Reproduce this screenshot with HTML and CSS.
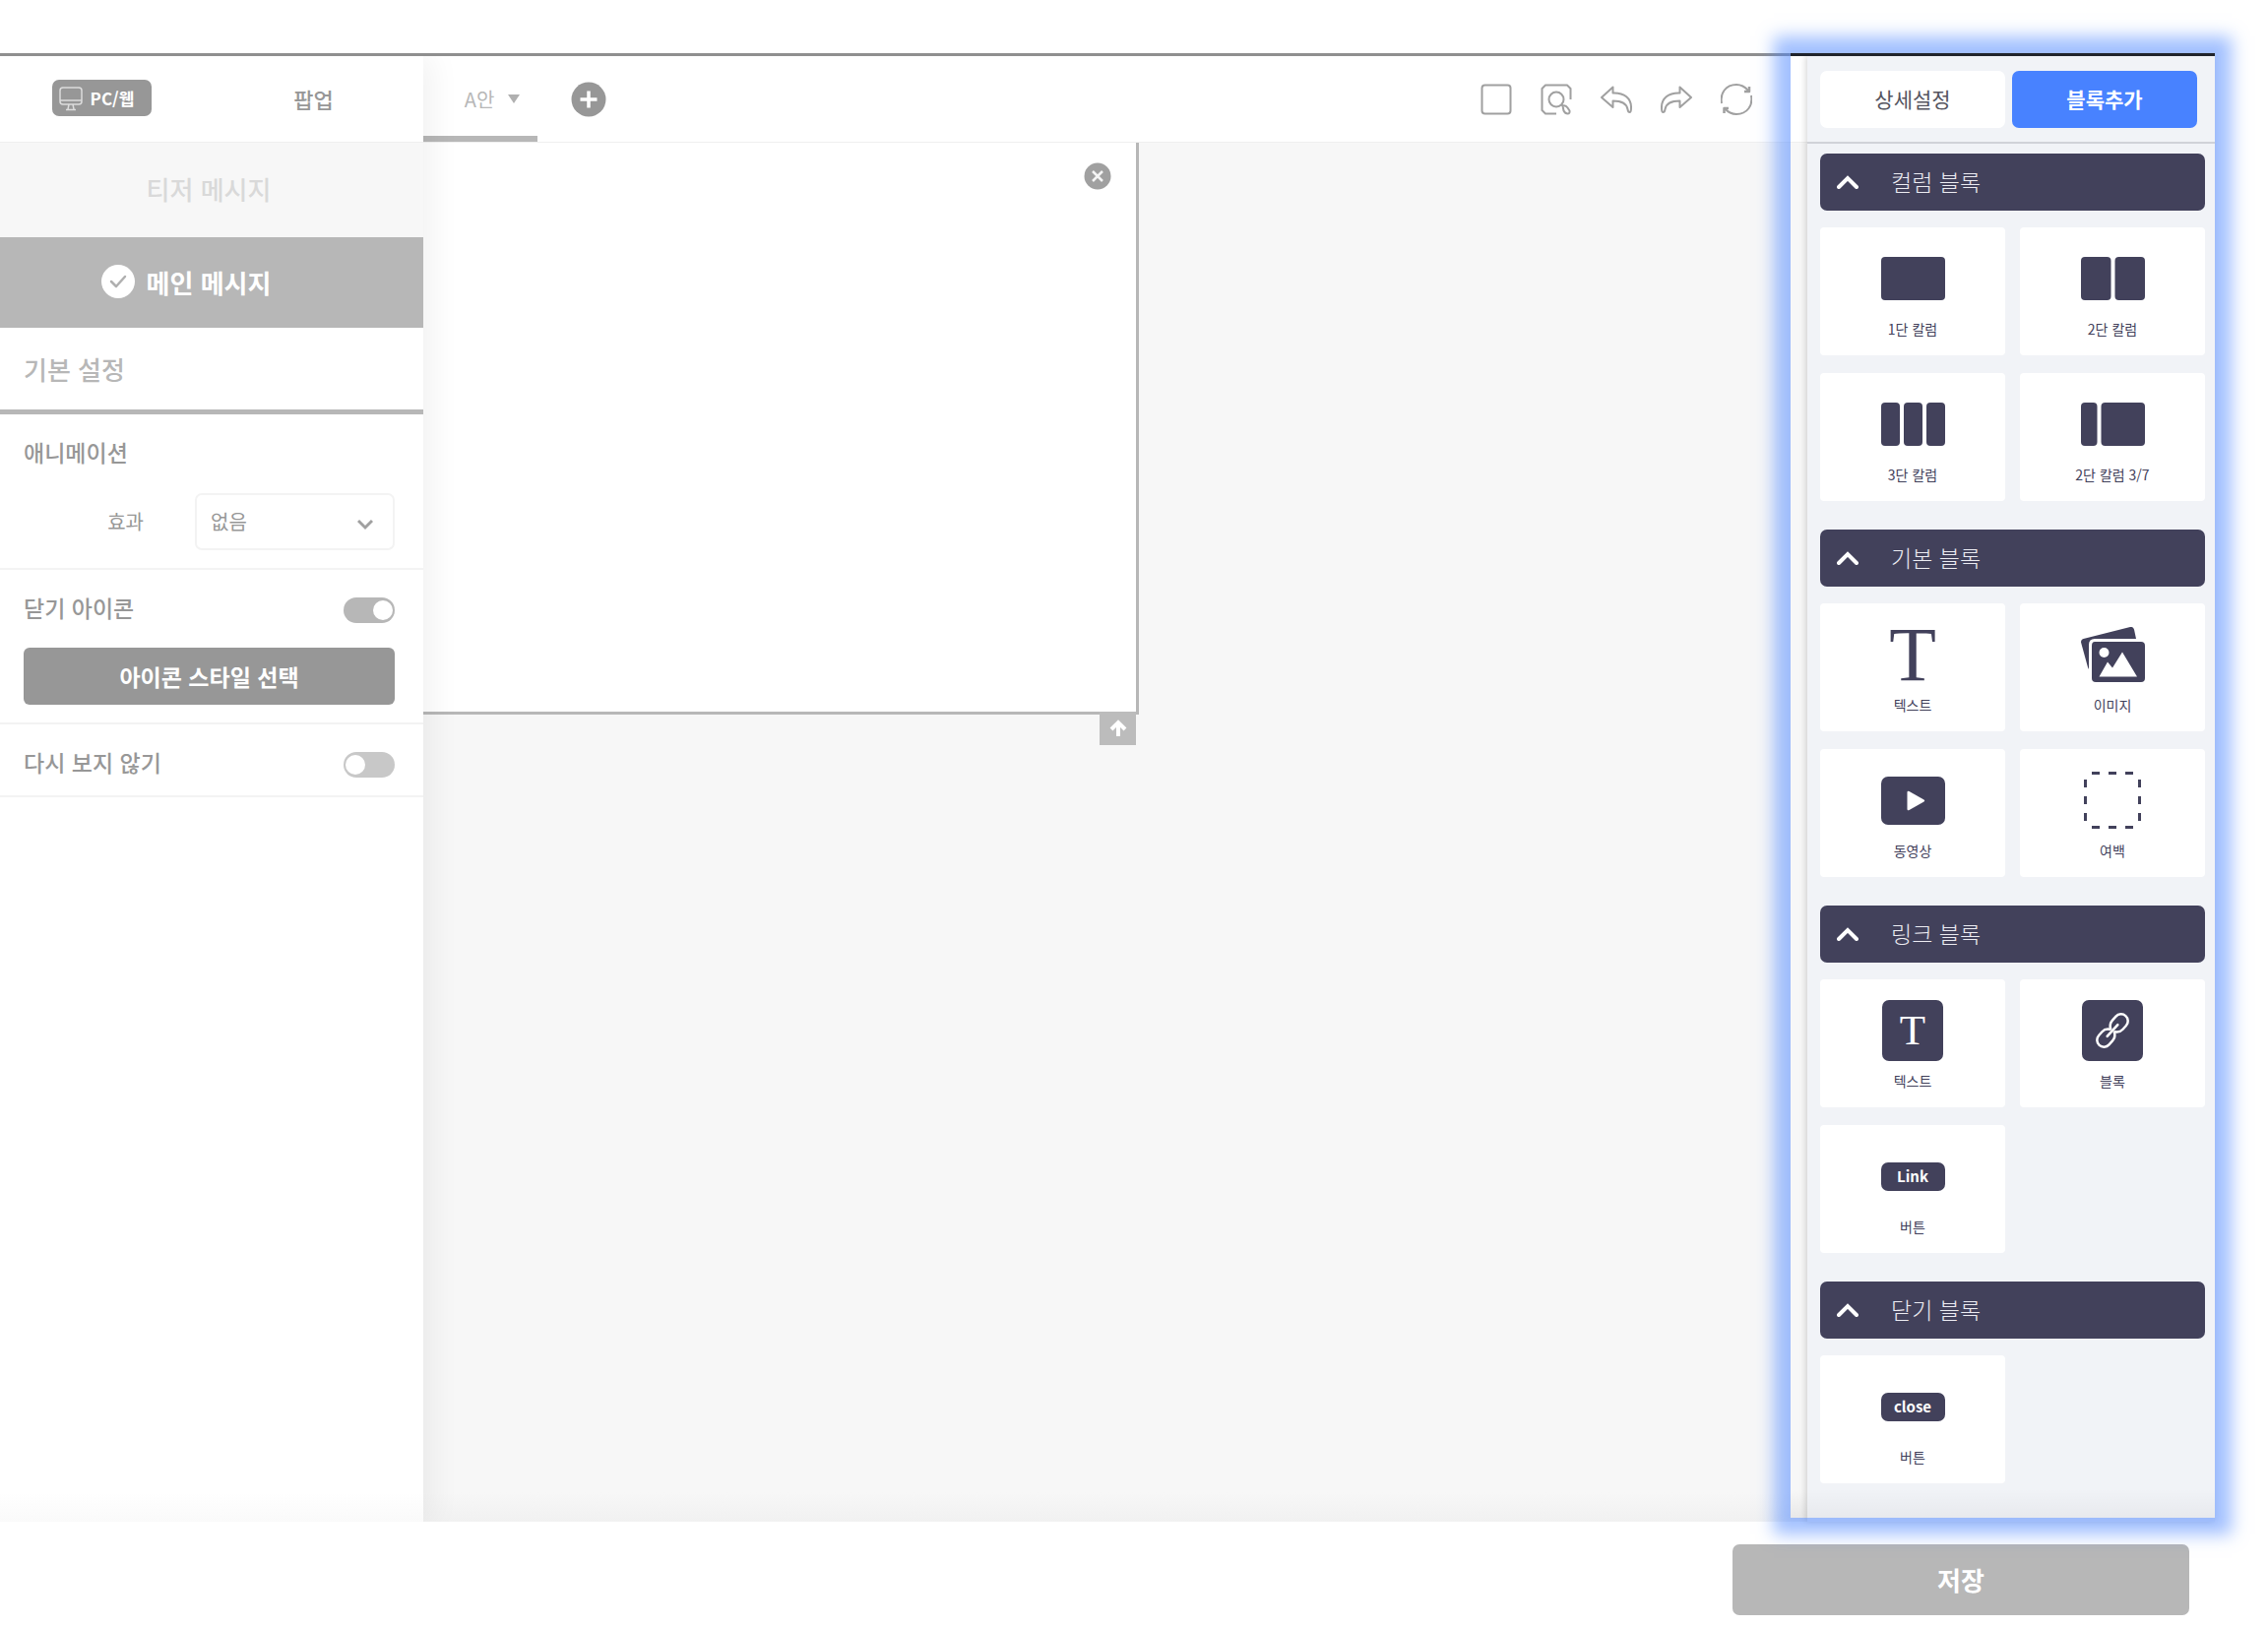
FILE: index.html
```html
<!DOCTYPE html>
<html lang="ko">
<head>
    <meta charset="UTF-8">
    <meta name="viewport" content="width=device-width, initial-scale=1.0">
    <title>팝업 메시지</title>
    <link rel="stylesheet" href="styles.css">
</head>
<body>
    <div class="editor">
        <section class="settings">
            <div class="settings-top">
                <div class="channel">
                    <span class="device-badge">
                        <svg width="24" height="26" viewBox="0 0 24 26" fill="none" stroke="#dcdcdc" stroke-width="1.5">
                            <rect x="1" y="2" width="22" height="17" rx="3"/>
                            <path d="M1 15h22M10 19l-1 5M14 19l1 5M7 24.5h10"/>
                        </svg>
                        PC/웹
                    </span>
                </div>
                <div class="channel">팝업</div>
            </div>
            <button type="button" class="message-tab">티저 메시지</button>
            <button type="button" class="message-tab active">
                <svg class="check" width="34" height="34" viewBox="0 0 34 34">
                    <circle cx="17" cy="17" r="17" fill="#fff"/>
                    <path d="M10 17l5 5 9-10" fill="none" stroke="#b0b0b0" stroke-width="2.5" stroke-linecap="round" stroke-linejoin="round"/>
                </svg>
                메인 메시지
            </button>
            <h2 class="settings-title">기본 설정</h2>
            <div class="setting">
                <h3>애니메이션</h3>
                <div class="effect-row">
                    <label for="effect">효과</label>
                    <div class="select-box">
                        <select id="effect">
                            <option>없음</option>
                        </select>
                        <svg class="select-arrow" width="16" height="12" viewBox="0 0 16 12" fill="none" stroke="#a0a0a0" stroke-width="3">
                            <path d="M1 2l7 7 7-7"/>
                        </svg>
                    </div>
                </div>
            </div>
            <div class="setting">
                <div class="toggle-row">
                    <label for="close-icon">닫기 아이콘</label>
                    <input type="checkbox" id="close-icon" class="toggle" checked>
                </div>
                <button type="button" class="style-button">아이콘 스타일 선택</button>
            </div>
            <div class="setting last">
                <div class="toggle-row">
                    <label for="hide-again">다시 보지 않기</label>
                    <input type="checkbox" id="hide-again" class="toggle">
                </div>
            </div>
        </section>

        <main class="workspace">
            <div class="toolbar">
                <button type="button" class="plan-tab">
                    A안
                    <svg width="12" height="9" viewBox="0 0 12 9"><path d="M0 0h12L6 9z" fill="#b0b0b0"/></svg>
                </button>
                <button type="button" class="icon-button" aria-label="추가">
                    <svg width="36" height="36" viewBox="0 0 36 36">
                        <circle cx="18" cy="18" r="17.5" fill="#979797"/>
                        <path d="M18 9.5v17M9.5 18h17" stroke="#fff" stroke-width="3.5"/>
                    </svg>
                </button>
                <div class="tools">
                    <button type="button" class="icon-button" aria-label="영역">
                        <svg width="32" height="32" viewBox="0 0 32 32"><rect x="1.5" y="1.5" width="29" height="29" rx="3"/></svg>
                    </button>
                    <button type="button" class="icon-button" aria-label="미리보기">
                        <svg width="32" height="32" viewBox="0 0 32 32">
                            <path d="M16 30.5H5L1.500 27V5L5 1.500h22L30.500 5v11"/>
                            <circle cx="16" cy="16" r="7.5"/>
                            <path d="M21.5 21.500l1.500 1.500M22.500 22.500q3-1 5 2l2 3q.5 3-2 3t-4-3z"/>
                        </svg>
                    </button>
                    <button type="button" class="icon-button" aria-label="실행 취소">
                        <svg width="32" height="32" viewBox="0 0 32 32">
                            <path d="M1 14L12.500 3.500v6C24 9 31.500 15 31 25q0 4-1.500 4t-2-3c-1-6-6-8.500-15-8.500v6.500z"/>
                        </svg>
                    </button>
                    <button type="button" class="icon-button" aria-label="다시 실행">
                        <svg width="32" height="32" viewBox="0 0 32 32">
                            <path d="M31 14L19.500 3.500v6C8 9 .5 15 1 25q0 4 1.500 4t2-3c1-6 6-8.500 15-8.500v6.500z"/>
                        </svg>
                    </button>
                    <button type="button" class="icon-button" aria-label="초기화">
                        <svg width="32" height="32" viewBox="0 0 32 32">
                            <path d="M1 20C-1 10 5 1 16 1c5 0 9 2.500 12 6M31 12c2 10-4 19-15 19-5 0-9-2.500-12-6"/>
                            <path d="M24 8h5V3M8 25H3.500v5" stroke-width="2.5"/>
                        </svg>
                    </button>
                </div>
            </div>
            <div class="canvas">
                <div class="popup">
                    <button type="button" class="icon-button popup-close" aria-label="닫기">
                        <svg width="28" height="28" viewBox="0 0 28 28">
                            <circle cx="14" cy="14" r="13.5" fill="#a0a0a0"/>
                            <path d="M9 9l10 10M19 9L9 19" stroke="#f4f4f4" stroke-width="2.5"/>
                        </svg>
                    </button>
                    <button type="button" class="popup-up" aria-label="위로">
                        <svg width="18" height="18" viewBox="0 0 18 18" fill="none" stroke="#fff" stroke-width="4">
                            <path d="M9 17V3M2 10l7-7 7 7"/>
                        </svg>
                    </button>
                </div>
            </div>
        </main>

        <aside class="blocks">
            <div class="block-tabs">
                <button type="button" class="block-tab">상세설정</button>
                <button type="button" class="block-tab active">블록추가</button>
            </div>
            <div class="block-list">
                <section class="block-group">
                    <button type="button" class="group-title">
                        <svg class="chevron" width="22" height="14" viewBox="0 0 22 14"><path d="M2 12l9-9 9 9"/></svg>
                        <span>컬럼 블록</span>
                    </button>
                    <div class="cards">
                        <button type="button" class="card">
                            <span class="card-icon"><svg width="65" height="44" viewBox="0 0 65 44"><rect width="65" height="44" rx="4"/></svg></span>
                            1단 칼럼
                        </button>
                        <button type="button" class="card">
                            <span class="card-icon"><svg width="65" height="44" viewBox="0 0 65 44"><rect width="30.5" height="44" rx="4"/><rect x="34.5" width="30.5" height="44" rx="4"/></svg></span>
                            2단 칼럼
                        </button>
                        <button type="button" class="card">
                            <span class="card-icon"><svg width="65" height="44" viewBox="0 0 65 44"><rect width="19" height="44" rx="4"/><rect x="23" width="19" height="44" rx="4"/><rect x="46" width="19" height="44" rx="4"/></svg></span>
                            3단 칼럼
                        </button>
                        <button type="button" class="card">
                            <span class="card-icon"><svg width="65" height="44" viewBox="0 0 65 44"><rect width="16.5" height="44" rx="4"/><rect x="20.5" width="44.5" height="44" rx="4"/></svg></span>
                            2단 칼럼 3/7
                        </button>
                    </div>
                </section>

                <section class="block-group">
                    <button type="button" class="group-title">
                        <svg class="chevron" width="22" height="14" viewBox="0 0 22 14"><path d="M2 12l9-9 9 9"/></svg>
                        <span>기본 블록</span>
                    </button>
                    <div class="cards">
                        <button type="button" class="card">
                            <span class="card-icon letter">T</span>
                            텍스트
                        </button>
                        <button type="button" class="card">
                            <span class="card-icon">
                                <svg width="65" height="56" viewBox="0 0 65 56">
                                    <path d="M2.500 12L50 0q3-.5 4 2.500l2 9.500H14Q8 12 8 18v25L7 41 0 15.500Q0 12.500 2.500 12z"/>
                                    <path d="M14 15h47q4 0 4 4v33q0 4-4 4H15q-4 0-4-4V19q0-4 3-4z"/>
                                    <circle cx="23.5" cy="26" r="5" fill="#fff"/>
                                    <path d="M18.500 50.500l8.500-15 5 6 10-16 15 25z" fill="#fff"/>
                                </svg>
                            </span>
                            이미지
                        </button>
                        <button type="button" class="card">
                            <span class="card-icon">
                                <svg width="65" height="49" viewBox="0 0 65 49">
                                    <rect width="65" height="49" rx="7"/>
                                    <path d="M26.500 16v17q0 2 2 1l15-8.500q1.500-1 0-2L28.500 15q-2-1-2 1z" fill="#fff"/>
                                </svg>
                            </span>
                            동영상
                        </button>
                        <button type="button" class="card">
                            <span class="card-icon">
                                <svg width="58" height="58" viewBox="0 0 58 58">
                                    <path d="M8 1.500h43M8 56.500h43M1.500 8v43M56.500 8v43" fill="none" stroke="#42415b" stroke-width="3" stroke-dasharray="8 9"/>
                                </svg>
                            </span>
                            여백
                        </button>
                    </div>
                </section>

                <section class="block-group">
                    <button type="button" class="group-title">
                        <svg class="chevron" width="22" height="14" viewBox="0 0 22 14"><path d="M2 12l9-9 9 9"/></svg>
                        <span>링크 블록</span>
                    </button>
                    <div class="cards">
                        <button type="button" class="card">
                            <span class="card-icon"><span class="letter-box">T</span></span>
                            텍스트
                        </button>
                        <button type="button" class="card">
                            <span class="card-icon">
                                <svg width="62" height="62" viewBox="0 0 62 62">
                                    <rect width="62" height="62" rx="7"/>
                                    <g fill="none" stroke="#fff" stroke-width="2.5" stroke-linecap="round" transform="rotate(-48 31 31)">
                                        <path d="M32 34q2.500 4 7 4h5a7 7 0 0 0 0-14h-5q-5.500 0-8 4.500"/>
                                        <path d="M30 28q-2.500-4-7-4h-5a7 7 0 0 0 0 14h5q5.500 0 8-4.500"/>
                                        <path d="M23 31h16"/>
                                    </g>
                                </svg>
                            </span>
                            블록
                        </button>
                        <button type="button" class="card">
                            <span class="card-icon"><span class="pill">Link</span></span>
                            버튼
                        </button>
                    </div>
                </section>

                <section class="block-group">
                    <button type="button" class="group-title">
                        <svg class="chevron" width="22" height="14" viewBox="0 0 22 14"><path d="M2 12l9-9 9 9"/></svg>
                        <span>닫기 블록</span>
                    </button>
                    <div class="cards">
                        <button type="button" class="card">
                            <span class="card-icon"><span class="pill">close</span></span>
                            버튼
                        </button>
                    </div>
                </section>
            </div>
        </aside>
        <div class="highlight"></div>
    </div>

    <footer class="footer">
        <button type="button" class="save-button">저장</button>
    </footer>
</body>
</html>
```
FILE: styles.css
```css
* {
    box-sizing: border-box;
}
body {
    margin: 0;
    min-height: 100vh;
    padding-top: 54px;
    display: flex;
    flex-direction: column;
    background-color: #fff;
    font-family: "Noto Sans CJK KR", "Noto Sans", sans-serif;
    color: #979797;
}
button {
    border: 0;
    padding: 0;
    margin: 0;
    background: none;
    font-family: inherit;
    color: inherit;
    cursor: pointer;
}
h2,
h3 {
    margin: 0;
    font-weight: 500;
}
svg {
    display: block;
    flex: none;
}
.editor {
    position: relative;
    flex: 1;
    display: flex;
    margin-right: 54px;
    border-top: 3px solid #8f8f8f;
}

/* left settings panel */
.settings {
    position: relative;
    z-index: 1;
    width: 430px;
    flex: none;
    background: linear-gradient(to top, #fafafa, #fff 30px);
    box-shadow: 8px 0 30px rgba(0, 0, 0, 0.06);
    clip-path: inset(0 -50px 0 0);
}
.settings-top {
    display: flex;
    height: 88px;
    border-bottom: 1px solid #efefef;
}
.channel {
    flex: 1;
    display: flex;
    align-items: center;
    justify-content: center;
    padding: 0 8px 2px 0;
    font-size: 22px;
    font-weight: 500;
}
.device-badge {
    display: flex;
    align-items: center;
    gap: 8px;
    height: 37px;
    padding: 0 18px 0 7px;
    border-radius: 7px;
    background-color: #979797;
    color: #fff;
    font-size: 17px;
    font-weight: 700;
}
.message-tab {
    display: flex;
    align-items: center;
    justify-content: center;
    width: 100%;
    height: 96px;
    background-color: #f7f7f7;
    color: #d9d9d9;
    font-size: 26px;
    font-weight: 500;
    padding: 0 6px 4px 0;
}
.message-tab.active {
    height: 92px;
    padding-bottom: 2px;
    background-color: #b7b7b7;
    color: #fff;
    font-weight: 700;
}
.check {
    margin-left: -46px;
    margin-right: 12px;
}
.settings-title {
    height: 88px;
    padding: 0 24px;
    border-bottom: 5px solid #b7b7b7;
    color: #b7b7b7;
    font-size: 26px;
    line-height: 83px;
}
.setting {
    padding: 22px 29px 18px 24px;
    border-bottom: 2px solid #f3f3f3;
    font-size: 23px;
    font-weight: 500;
    line-height: 32px;
}
.setting h3 {
    font-size: 23px;
    line-height: 32px;
}
.effect-row {
    display: flex;
    align-items: center;
    justify-content: flex-end;
    margin-top: 26px;
    font-size: 20px;
    font-weight: 400;
}
.select-box {
    position: relative;
    width: 203px;
    margin-left: 52px;
}
.select-box select {
    width: 100%;
    height: 58px;
    padding: 0 14px 2px;
    border: 2px solid #f3f3f3;
    border-radius: 7px;
    background-color: #fff;
    appearance: none;
    font-family: inherit;
    font-size: 20px;
    color: #979797;
}
.select-arrow {
    position: absolute;
    right: 22px;
    top: 26px;
    pointer-events: none;
}
.toggle-row {
    display: flex;
    align-items: center;
    justify-content: space-between;
}
.toggle {
    appearance: none;
    display: flex;
    align-items: center;
    width: 52px;
    height: 26px;
    margin: 6px 0 0;
    padding: 0 2px;
    border-radius: 13px;
    background-color: #c8c8c8;
}
.toggle::before {
    content: "";
    width: 20px;
    height: 20px;
    border-radius: 50%;
    background-color: #fff;
}
.toggle:checked {
    justify-content: flex-end;
    background-color: #b7b7b7;
}
.style-button {
    width: 100%;
    height: 58px;
    margin-top: 25px;
    border-radius: 6px;
    background-color: #979797;
    color: #fff;
    font-size: 23px;
    font-weight: 700;
}

/* workspace */
.workspace {
    flex: 1;
    min-width: 0;
    display: flex;
    flex-direction: column;
}
.toolbar {
    display: flex;
    align-items: center;
    height: 88px;
    border-bottom: 1px solid #efefef;
    background-color: #fff;
}
.plan-tab {
    display: flex;
    align-items: center;
    justify-content: center;
    gap: 14px;
    width: 116px;
    height: 100%;
    margin-right: 34px;
    padding-left: 24px;
    border-top: 6px solid #fff;
    border-bottom: 6px solid #b7b7b7;
    color: #b7b7b7;
    font-size: 20px;
}
.tools {
    display: flex;
    gap: 29px;
    margin-left: auto;
    padding-right: 56px;
}
.tools svg {
    fill: none;
    stroke: #a0a0a0;
    stroke-width: 2;
    stroke-linejoin: round;
}
.canvas {
    flex: 1;
    padding-right: 679px;
    background: linear-gradient(to top, #f1f1f1, #f7f7f7 30px);
}
.popup {
    position: relative;
    height: 581px;
    border: solid #b7b7b7;
    border-width: 0 3px 3px 0;
    background-color: #fff;
}
.popup-close {
    position: absolute;
    top: 20px;
    right: 25px;
}
.popup-up {
    position: absolute;
    right: 0;
    top: 100%;
    display: flex;
    align-items: center;
    justify-content: center;
    width: 37px;
    height: 34px;
    background-color: #bcbcbc;
}

/* block panel */
.blocks {
    width: 414px;
    flex: none;
    background-color: #f1f3f7;
    box-shadow: -2px 0 6px rgba(0, 0, 0, 0.15);
    color: #42415b;
}
.block-tabs {
    display: flex;
    gap: 7px;
    height: 89px;
    padding: 15px 18px 14px 13px;
    border-bottom: 2px solid #d0d2d8;
}
.block-tab {
    flex: 1;
    padding-bottom: 2px;
    border-radius: 7px;
    background-color: #fff;
    color: #55555f;
    font-size: 21px;
}
.block-tab.active {
    background-color: #4882ff;
    color: #fff;
    font-weight: 700;
}
.block-list {
    display: flex;
    flex-direction: column;
    gap: 29px;
    padding: 10px 10px 10px 13px;
}
.block-group {
    display: flex;
    flex-direction: column;
    gap: 17px;
}
.group-title {
    display: flex;
    align-items: center;
    gap: 33px;
    height: 58px;
    padding-left: 17px;
    border-radius: 7px;
    background-color: #42415b;
    color: #ececf2;
    font-size: 23px;
    font-weight: 300;
}
.group-title span {
    padding-bottom: 3px;
}
.chevron {
    fill: none;
    stroke: #fff;
    stroke-width: 4;
    stroke-linecap: round;
}
.cards {
    display: grid;
    grid-template-columns: 1fr 1fr;
    gap: 18px 15px;
}
.card {
    display: flex;
    flex-direction: column;
    align-items: center;
    height: 130px;
    padding-top: 21px;
    border-radius: 4px;
    background-color: #fff;
    font-size: 14px;
    line-height: 20px;
}
.card-icon {
    display: flex;
    align-items: center;
    justify-content: center;
    height: 62px;
    margin-bottom: 10px;
    fill: #42415b;
}
.letter {
    font-family: "Liberation Serif", serif;
    font-size: 78px;
    line-height: 62px;
}
.letter-box {
    width: 62px;
    height: 62px;
    border-radius: 7px;
    background-color: #42415b;
    color: #fff;
    font-family: "Liberation Serif", serif;
    font-size: 43px;
    line-height: 62px;
}
.pill {
    width: 65px;
    height: 29px;
    border-radius: 7px;
    background-color: #42415b;
    color: #fff;
    font-size: 15px;
    font-weight: 700;
    line-height: 27px;
}

/* blue glow around the block panel */
.highlight {
    position: absolute;
    z-index: 2;
    top: -3px;
    right: 0;
    bottom: 4px;
    width: 431px;
    border-top: 3px solid #20242c;
    box-shadow: 0 0 16px 17px rgba(72, 131, 255, 0.5);
    background: linear-gradient(to top, rgba(0, 0, 0, 0.04), transparent 30px);
    pointer-events: none;
}

.footer {
    display: flex;
    justify-content: flex-end;
    padding: 23px 80px 12px;
}
.save-button {
    width: 464px;
    height: 72px;
    padding-bottom: 2px;
    border-radius: 7px;
    background-color: #b7b7b7;
    color: #fff;
    font-size: 26px;
    font-weight: 700;
}
```
